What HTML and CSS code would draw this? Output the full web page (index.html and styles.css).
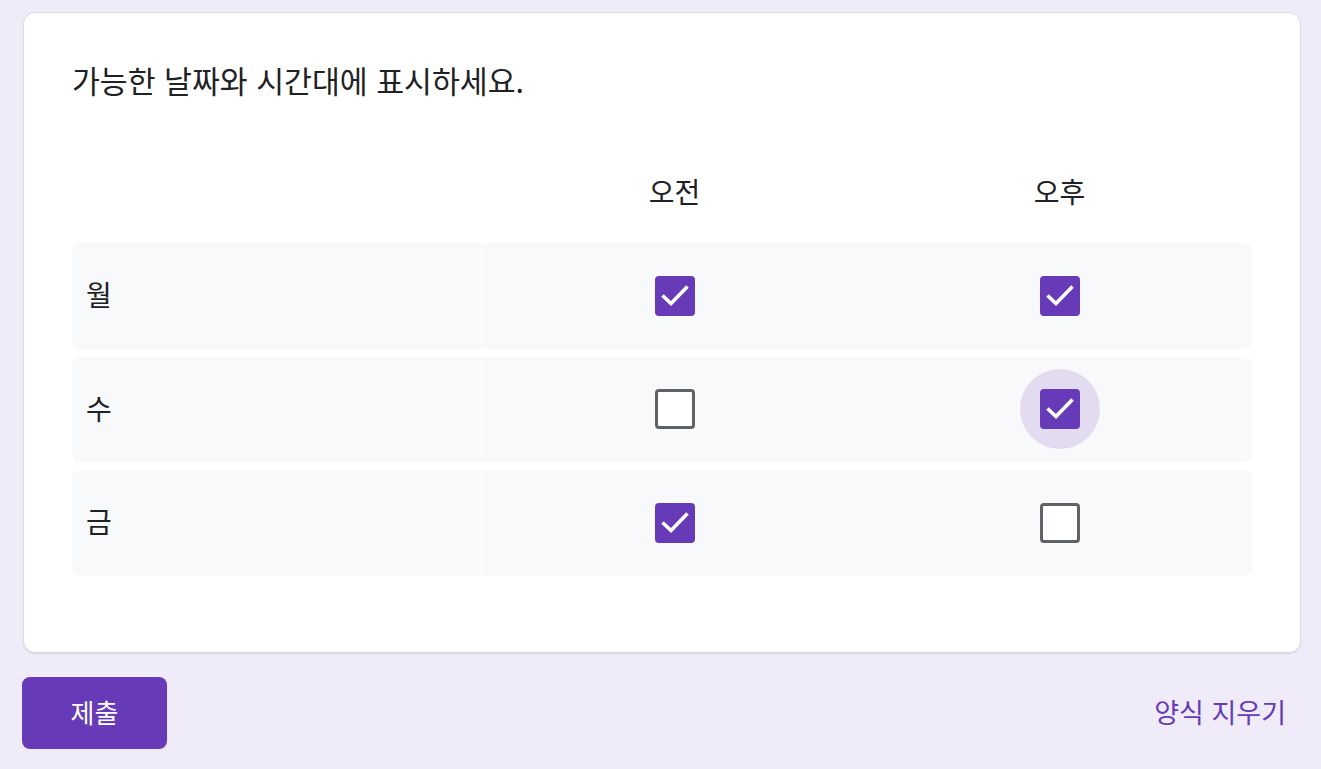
FILE: index.html
```html
<!DOCTYPE html>
<html lang="ko">
<head>
<meta charset="utf-8">
<link rel="stylesheet" href="styles.css">
</head>
<body>
<div class="page">
  <div class="card">
    <div class="title">가능한 날짜와 시간대에 표시하세요.</div>
    <div class="grid">
      <div class="head">
        <div class="hcell"></div>
        <div class="hcell">오전</div>
        <div class="hcell">오후</div>
      </div>
      <div class="row">
        <div class="label">월</div>
        <div class="cell"><span class="box checked"><svg viewBox="0 0 40 40"><polyline points="7.5,19.5 16,27.5 32.5,10.5"/></svg></span></div>
        <div class="cell"><span class="box checked"><svg viewBox="0 0 40 40"><polyline points="7.5,19.5 16,27.5 32.5,10.5"/></svg></span></div>
      </div>
      <div class="row">
        <div class="label">수</div>
        <div class="cell"><span class="box"></span></div>
        <div class="cell"><span class="ripple"><span class="box checked"><svg viewBox="0 0 40 40"><polyline points="7.5,19.5 16,27.5 32.5,10.5"/></svg></span></span></div>
      </div>
      <div class="row">
        <div class="label">금</div>
        <div class="cell"><span class="box checked"><svg viewBox="0 0 40 40"><polyline points="7.5,19.5 16,27.5 32.5,10.5"/></svg></span></div>
        <div class="cell"><span class="box"></span></div>
      </div>
    </div>
  </div>
  <div class="actions">
    <button class="submit">제출</button>
    <a class="clear">양식 지우기</a>
  </div>
</div>
</body>
</html>
```
FILE: styles.css
```css
* { box-sizing: border-box; }
html, body { margin: 0; padding: 0; }
body {
  background: #f0ebf8;
  font-family: "Noto Sans CJK KR", "Noto Sans", sans-serif;
  color: #202124;
  width: 1321px;
  height: 769px;
  overflow: hidden;
}
.page {
  padding: 12px 20px 0 22px;
}
.card {
  margin-left: 1px;
  background: #fff;
  border: 1px solid #dadce0;
  border-radius: 12px;
  box-shadow: 0 1px 1px rgba(60,64,67,0.12);
  padding: 47px 48px 76px 48px;
}
.title {
  font-size: 30.3px;
  line-height: 40px;
  height: 46px;
}
.grid {
  margin-top: 31px;
  display: flex;
  flex-direction: column;
  gap: 8px;
}
.head, .row {
  display: grid;
  grid-template-columns: 410px 1fr 1fr;
}
.head {
  height: 99px;
  padding-top: 8px;
  align-items: center;
  margin-bottom: -1px;
}
.hcell {
  text-align: center;
  font-size: 28px;
  line-height: 30px;
}
.row {
  height: 105.5px;
  border-radius: 8px;
  overflow: hidden;
}
.label, .cell {
  background: #f8f9fa;
  display: flex;
  align-items: center;
}
.label {
  padding-left: 14px;
  padding-bottom: 3px;
  font-size: 28px;
  border-right: 1px solid #fff;
}
.cell {
  justify-content: center;
}
.box {
  width: 40px;
  height: 40px;
  border: 3px solid #5f6368;
  border-radius: 4px;
  background: #fff;
  display: block;
}
.box.checked {
  background: #673ab7;
  border: none;
}
.box svg {
  width: 40px;
  height: 40px;
  display: block;
}
.box polyline {
  fill: none;
  stroke: #fff;
  stroke-width: 3.6;
}
.ripple {
  width: 80px;
  height: 80px;
  border-radius: 50%;
  background: #e3dcf1;
  display: flex;
  align-items: center;
  justify-content: center;
}
.actions {
  margin-top: 24px;
  display: flex;
  justify-content: space-between;
  align-items: center;
}
.submit {
  width: 145px;
  height: 72px;
  background: #673ab7;
  color: #fff;
  border: none;
  border-radius: 8px;
  font-family: "Noto Sans CJK KR", "Noto Sans", sans-serif;
  font-size: 26px;
  padding: 0 0 2px 0;
}
.clear {
  color: #673ab7;
  font-size: 27px;
  margin-right: 15px;
  padding-bottom: 2px;
}
```
